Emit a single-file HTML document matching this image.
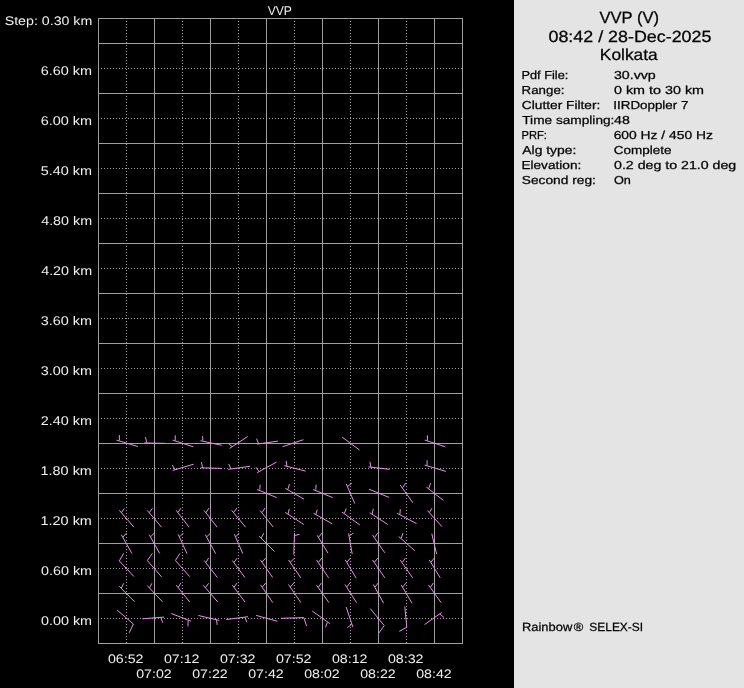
<!DOCTYPE html>
<html><head><meta charset="utf-8"><style>
html,body{margin:0;padding:0;background:#000;width:744px;height:688px;overflow:hidden;font-family:"Liberation Sans",sans-serif}
#rp{position:absolute;left:514px;top:0;width:230px;height:688px;background:#e4e4e4}
</style></head><body>
<div id="rp"></div>
<svg width="744" height="688" viewBox="0 0 744 688" style="position:absolute;left:0;top:0;will-change:transform" font-family="Liberation Sans, sans-serif" text-rendering="geometricPrecision"><defs><pattern id="dh" x="98" y="0" width="3" height="1" patternUnits="userSpaceOnUse"><rect x="0" y="0" width="1" height="1" fill="#a0a0a0"/></pattern><pattern id="dv" x="0" y="18" width="1" height="3" patternUnits="userSpaceOnUse"><rect x="0" y="0" width="1" height="1" fill="#a0a0a0"/></pattern></defs><rect x="98" y="68" width="365" height="1" fill="url(#dh)"/><rect x="98" y="118" width="365" height="1" fill="url(#dh)"/><rect x="98" y="168" width="365" height="1" fill="url(#dh)"/><rect x="98" y="218" width="365" height="1" fill="url(#dh)"/><rect x="98" y="268" width="365" height="1" fill="url(#dh)"/><rect x="98" y="318" width="365" height="1" fill="url(#dh)"/><rect x="98" y="368" width="365" height="1" fill="url(#dh)"/><rect x="98" y="418" width="365" height="1" fill="url(#dh)"/><rect x="98" y="468" width="365" height="1" fill="url(#dh)"/><rect x="98" y="518" width="365" height="1" fill="url(#dh)"/><rect x="98" y="568" width="365" height="1" fill="url(#dh)"/><rect x="98" y="618" width="365" height="1" fill="url(#dh)"/><rect x="126" y="18" width="1" height="626" fill="url(#dv)"/><rect x="182" y="18" width="1" height="626" fill="url(#dv)"/><rect x="238" y="18" width="1" height="626" fill="url(#dv)"/><rect x="294" y="18" width="1" height="626" fill="url(#dv)"/><rect x="350" y="18" width="1" height="626" fill="url(#dv)"/><rect x="406" y="18" width="1" height="626" fill="url(#dv)"/><rect x="98" y="43" width="365" height="1" fill="#a0a0a0"/><rect x="98" y="93" width="365" height="1" fill="#a0a0a0"/><rect x="98" y="143" width="365" height="1" fill="#a0a0a0"/><rect x="98" y="193" width="365" height="1" fill="#a0a0a0"/><rect x="98" y="243" width="365" height="1" fill="#a0a0a0"/><rect x="98" y="293" width="365" height="1" fill="#a0a0a0"/><rect x="98" y="343" width="365" height="1" fill="#a0a0a0"/><rect x="98" y="393" width="365" height="1" fill="#a0a0a0"/><rect x="98" y="443" width="365" height="1" fill="#a0a0a0"/><rect x="98" y="493" width="365" height="1" fill="#a0a0a0"/><rect x="98" y="543" width="365" height="1" fill="#a0a0a0"/><rect x="98" y="593" width="365" height="1" fill="#a0a0a0"/><rect x="98" y="18" width="365" height="1" fill="#a0a0a0"/><rect x="98" y="643" width="365" height="1" fill="#a0a0a0"/><rect x="98" y="18" width="1" height="626" fill="#a0a0a0"/><rect x="462" y="18" width="1" height="626" fill="#a0a0a0"/><rect x="154" y="18" width="1" height="626" fill="#a0a0a0"/><rect x="210" y="18" width="1" height="626" fill="#a0a0a0"/><rect x="266" y="18" width="1" height="626" fill="#a0a0a0"/><rect x="322" y="18" width="1" height="626" fill="#a0a0a0"/><rect x="378" y="18" width="1" height="626" fill="#a0a0a0"/><rect x="434" y="18" width="1" height="626" fill="#a0a0a0"/><g fill="none" stroke="#ec8eec" stroke-width="1.0" stroke-linecap="butt" stroke-linejoin="miter"><polyline points="116.5,440.1 137.8,446.5"/><polyline points="119.4,440.4 119.4,435.1"/><polyline points="144.3,442.9 165.5,443.4"/><polyline points="146.7,442.5 145.5,437.1"/><polyline points="172.7,440.1 193.3,446.8"/><polyline points="175.2,440.5 175.2,435.3"/><polyline points="200.5,440.7 221.7,445.3"/><polyline points="202.9,440.5 202.5,436.2"/><polyline points="229.6,448.4 247.7,436.5"/><polyline points="232.1,446.5 228.1,443.3"/><polyline points="257.3,444.1 277.9,441.1"/><polyline points="258.6,443.7 256.5,438.7"/><polyline points="282.6,446.7 303.4,439.7"/><polyline points="342.2,437.1 359.5,450"/><polyline points="424.8,440.1 445.3,446.8"/><polyline points="427.4,440.5 427.4,435.3"/><polyline points="172.7,470.5 193.6,464.2"/><polyline points="175.1,469.7 172.3,465.1"/><polyline points="200.5,467.8 221.9,468.4"/><polyline points="202.6,467.8 201.4,462.1"/><polyline points="228.3,469.3 250,466.3"/><polyline points="230.8,468.7 228.7,463.9"/><polyline points="257.2,472.6 276.6,462.1"/><polyline points="259,471.4 256,467.3"/><polyline points="284.4,465.7 305.6,471.1"/><polyline points="286.9,466.1 286.2,460.9"/><polyline points="368.5,466.9 389.6,469.3"/><polyline points="370.9,467.3 369.9,461.7"/><polyline points="424.7,465.1 445.9,471.4"/><polyline points="427.1,465.5 427.1,460.3"/><polyline points="257.1,489.5 276.7,497.6"/><polyline points="259.8,489.7 260.1,484.7"/><polyline points="285.3,488.3 304,499.2"/><polyline points="288,488.9 289.5,484"/><polyline points="313,489.5 332.7,497.6"/><polyline points="315.8,489.7 316.1,484.7"/><polyline points="346.3,484 354.8,503.6"/><polyline points="347.5,486.5 351.8,483.1"/><polyline points="369,489.2 389,497.4"/><polyline points="400.2,485 412.9,502.8"/><polyline points="402.6,487.7 405.6,483.1"/><polyline points="426.3,487.1 443.3,500.3"/><polyline points="428.7,488.5 430.6,483.2"/><polyline points="119.3,510.3 133.8,527"/><polyline points="121.3,512.7 124.4,508.4"/><polyline points="147.3,510.5 161.6,527.2"/><polyline points="149.2,512.7 152.4,508.4"/><polyline points="176.1,510.3 189.1,527.2"/><polyline points="178.2,512.1 181,508.1"/><polyline points="204.1,510.5 217.1,527.2"/><polyline points="205.9,512.7 209,508.1"/><polyline points="231.6,510.3 245.6,527.2"/><polyline points="233.8,512.1 236.8,508.1"/><polyline points="260.1,510.5 273.1,527"/><polyline points="262.2,512.4 265,508.1"/><polyline points="285.3,512.4 303.8,524.5"/><polyline points="288.1,513.9 289.3,508.8"/><polyline points="313.5,513.3 332.3,523.8"/><polyline points="315.9,514.5 317.2,509.7"/><polyline points="342,512.1 359.9,525"/><polyline points="344.4,513.3 346.2,508.4"/><polyline points="369.7,512.7 387.8,524.5"/><polyline points="372.1,514.1 373.3,508.8"/><polyline points="397.2,513.3 416.5,523.6"/><polyline points="399.9,514.5 400.3,509.3"/><polyline points="427.4,510.5 441.9,526.6"/><polyline points="429.6,512.4 432,508.1"/><polyline points="121.3,534.7 131.9,553.4"/><polyline points="122.9,537.1 126.5,533.1"/><polyline points="149.2,534.7 159.7,553.4"/><polyline points="150.7,536.7 154.6,532.8"/><polyline points="178.2,534.3 187,553.6"/><polyline points="179.8,536.7 183.4,533.1"/><polyline points="205.3,534.7 215.6,553.6"/><polyline points="206.9,536.7 210.5,533.1"/><polyline points="234.4,534.3 242.8,553.6"/><polyline points="235.9,536.7 239.2,533.1"/><polyline points="259.2,536.2 274.6,551.6"/><polyline points="261.3,537.9 263.8,533.1"/><polyline points="294.5,533.1 293.8,554.6"/><polyline points="294.8,535.5 299.6,534.3"/><polyline points="317.2,535.3 328,553.2"/><polyline points="318.7,537.1 322,533.1"/><polyline points="348.6,533.4 352.2,554"/><polyline points="349.2,535.9 353.4,533.1"/><polyline points="372.5,535 384.8,552.8"/><polyline points="374.9,537.1 377.6,533.1"/><polyline points="398.7,536.5 414.8,550.7"/><polyline points="401.2,538.3 403,533.1"/><polyline points="431.8,533.7 436.6,554.1"/><polyline points="123.7,553.3 119.3,560.9 134,576.6"/><polyline points="152.4,553.3 147.3,560.5 161.6,576.9"/><polyline points="180,553.3 175.4,560.5 189.7,576.6"/><polyline points="204.1,560.5 217.4,577.5"/><polyline points="205.9,562.4 208.6,558.1"/><polyline points="232.3,560.5 244.9,577.5"/><polyline points="234,562.4 237.1,558.1"/><polyline points="260.4,559.9 272.7,577.5"/><polyline points="262.2,562.1 265.5,558.1"/><polyline points="288.5,559.9 300.8,577.8"/><polyline points="290.5,562.1 294.5,558.1"/><polyline points="316.5,559.9 328.6,577.8"/><polyline points="318.7,562.1 322,557.8"/><polyline points="345.3,559.9 356.2,578.1"/><polyline points="347,562.1 350.4,558.1"/><polyline points="372.5,559.9 384.8,577.8"/><polyline points="374.5,562.1 377.8,558.1"/><polyline points="400.3,560.2 412.6,577.8"/><polyline points="402.4,562.1 405.4,558.1"/><polyline points="429.3,559.9 440.2,577.8"/><polyline points="431,562.1 434.2,558.1"/><polyline points="119.3,586.3 134.6,601.8"/><polyline points="121.3,588.1 123.7,583.3"/><polyline points="147.3,585.7 162.5,601.8"/><polyline points="149.5,587.8 151.9,583.3"/><polyline points="176.1,585.1 189.7,602"/><polyline points="178.2,587.3 181,582.9"/><polyline points="203.3,585.3 217.8,602"/><polyline points="205.3,587.8 208.6,583.3"/><polyline points="232.3,585.1 245.2,602.3"/><polyline points="234,587.3 237.1,582.9"/><polyline points="260.6,584.9 272.7,602.6"/><polyline points="262.5,586.9 265.8,582.9"/><polyline points="288.5,584.5 300.8,602.6"/><polyline points="290.5,586.9 294.2,582.4"/><polyline points="316.5,585.1 328.9,602.6"/><polyline points="318.4,587.3 321.4,582.9"/><polyline points="345,584.5 356.5,602.6"/><polyline points="346.8,586.9 350.4,582.4"/><polyline points="373.3,584.5 383.6,603.2"/><polyline points="375.1,586.9 378.5,582.7"/><polyline points="401.2,584.9 412,603.2"/><polyline points="402.7,586.9 406.4,582.7"/><polyline points="428.4,584.9 441.1,602.6"/><polyline points="430.5,587.3 433.4,582.9"/><polyline points="117.1,610.1 133.4,624 129.2,632.8"/><polyline points="142.3,618.8 164,617.1"/><polyline points="160.9,617.4 162.8,622.8"/><polyline points="171.3,613.5 191.1,621.2"/><polyline points="188.2,620.4 187.9,626.4"/><polyline points="198.4,615.5 219.2,620.4"/><polyline points="216.6,619.8 217.1,624.9"/><polyline points="226.3,619.5 248,616.7"/><polyline points="244.9,617.1 246.8,622.2"/><polyline points="256.2,615.4 277.4,621.3"/><polyline points="281.2,618.3 303.8,617.6 306.6,626.1"/><polyline points="312.3,611.1 329.9,623.6"/><polyline points="327.4,622.2 325.6,627.3"/><polyline points="346.2,607.1 352.8,627"/><polyline points="351.6,624.4 347.4,627.6"/><polyline points="370.3,608.6 384.2,625.6 378.8,633.1"/><polyline points="404.8,606.5 406.8,627.3 399.3,631.3"/><polyline points="424.5,624.6 441.7,612.5"/><polyline points="439.9,614 443.9,617.4"/></g><text id="step" x="4.68" y="25.1" font-size="12.4" fill="#f0f0f0" textLength="87.64" lengthAdjust="spacingAndGlyphs">Step: 0.30 km</text><text id="lab0" x="40.72" y="74.9" font-size="12.6" fill="#f0f0f0" textLength="51.35" lengthAdjust="spacingAndGlyphs">6.60 km</text><text id="lab1" x="40.72" y="124.9" font-size="12.6" fill="#f0f0f0" textLength="51.35" lengthAdjust="spacingAndGlyphs">6.00 km</text><text id="lab2" x="40.83" y="174.9" font-size="12.6" fill="#f0f0f0" textLength="51.24" lengthAdjust="spacingAndGlyphs">5.40 km</text><text id="lab3" x="41.19" y="224.9" font-size="12.6" fill="#f0f0f0" textLength="50.89" lengthAdjust="spacingAndGlyphs">4.80 km</text><text id="lab4" x="41.19" y="274.9" font-size="12.6" fill="#f0f0f0" textLength="50.89" lengthAdjust="spacingAndGlyphs">4.20 km</text><text id="lab5" x="40.83" y="324.9" font-size="12.6" fill="#f0f0f0" textLength="51.18" lengthAdjust="spacingAndGlyphs">3.60 km</text><text id="lab6" x="40.83" y="374.9" font-size="12.6" fill="#f0f0f0" textLength="51.18" lengthAdjust="spacingAndGlyphs">3.00 km</text><text id="lab7" x="40.83" y="424.9" font-size="12.6" fill="#f0f0f0" textLength="51.26" lengthAdjust="spacingAndGlyphs">2.40 km</text><text id="lab8" x="40.56" y="474.9" font-size="12.6" fill="#f0f0f0" textLength="51.36" lengthAdjust="spacingAndGlyphs">1.80 km</text><text id="lab9" x="40.56" y="524.9" font-size="12.6" fill="#f0f0f0" textLength="51.36" lengthAdjust="spacingAndGlyphs">1.20 km</text><text id="lab10" x="41.02" y="574.9" font-size="12.6" fill="#f0f0f0" textLength="51.02" lengthAdjust="spacingAndGlyphs">0.60 km</text><text id="lab11" x="41.02" y="624.9" font-size="12.6" fill="#f0f0f0" textLength="51.02" lengthAdjust="spacingAndGlyphs">0.00 km</text><text id="vvptop" x="267.68" y="14.7" font-size="12.6" fill="#f0f0f0" textLength="24.23" lengthAdjust="spacingAndGlyphs">VVP</text><text id="t1_0" x="107.94" y="662.8" font-size="12.4" fill="#f0f0f0" textLength="35.60" lengthAdjust="spacingAndGlyphs">06:52</text><text id="t1_1" x="163.93" y="662.8" font-size="12.4" fill="#f0f0f0" textLength="35.60" lengthAdjust="spacingAndGlyphs">07:12</text><text id="t1_2" x="219.93" y="662.8" font-size="12.4" fill="#f0f0f0" textLength="35.60" lengthAdjust="spacingAndGlyphs">07:32</text><text id="t1_3" x="275.94" y="662.8" font-size="12.4" fill="#f0f0f0" textLength="35.60" lengthAdjust="spacingAndGlyphs">07:52</text><text id="t1_4" x="331.94" y="662.8" font-size="12.4" fill="#f0f0f0" textLength="35.60" lengthAdjust="spacingAndGlyphs">08:12</text><text id="t1_5" x="387.94" y="662.8" font-size="12.4" fill="#f0f0f0" textLength="35.60" lengthAdjust="spacingAndGlyphs">08:32</text><text id="t2_0" x="136.24" y="677.7" font-size="12.4" fill="#f0f0f0" textLength="35.44" lengthAdjust="spacingAndGlyphs">07:02</text><text id="t2_1" x="192.24" y="677.7" font-size="12.4" fill="#f0f0f0" textLength="35.44" lengthAdjust="spacingAndGlyphs">07:22</text><text id="t2_2" x="248.24" y="677.7" font-size="12.4" fill="#f0f0f0" textLength="35.44" lengthAdjust="spacingAndGlyphs">07:42</text><text id="t2_3" x="304.24" y="677.7" font-size="12.4" fill="#f0f0f0" textLength="35.44" lengthAdjust="spacingAndGlyphs">08:02</text><text id="t2_4" x="360.24" y="677.7" font-size="12.4" fill="#f0f0f0" textLength="35.44" lengthAdjust="spacingAndGlyphs">08:22</text><text id="t2_5" x="416.24" y="677.7" font-size="12.4" fill="#f0f0f0" textLength="35.44" lengthAdjust="spacingAndGlyphs">08:42</text><text id="h1" x="599.5" y="22.6" font-size="16.3" fill="#000" stroke="#000" stroke-width="0.25" textLength="59.48" lengthAdjust="spacingAndGlyphs">VVP (V)</text><text id="h2" x="548.47" y="41.9" font-size="16.2" fill="#000" stroke="#000" stroke-width="0.25" textLength="162.95" lengthAdjust="spacingAndGlyphs">08:42 / 28-Dec-2025</text><text id="h3" x="599.81" y="60.0" font-size="16" fill="#000" stroke="#000" stroke-width="0.25" textLength="57.96" lengthAdjust="spacingAndGlyphs">Kolkata</text><text id="ra0" x="521.48" y="78.6" font-size="11.6" fill="#000" stroke="#000" stroke-width="0.25" textLength="46.83" lengthAdjust="spacingAndGlyphs">Pdf File:</text><text id="rb0" x="613.9" y="78.6" font-size="11.6" fill="#000" stroke="#000" stroke-width="0.25" textLength="41.90" lengthAdjust="spacingAndGlyphs">30.vvp</text><text id="ra1" x="521.6" y="93.66999999999999" font-size="11.6" fill="#000" stroke="#000" stroke-width="0.25" textLength="42.89" lengthAdjust="spacingAndGlyphs">Range:</text><text id="rb1" x="613.97" y="93.66999999999999" font-size="11.6" fill="#000" stroke="#000" stroke-width="0.25" textLength="90.05" lengthAdjust="spacingAndGlyphs">0 km to 30 km</text><text id="ra2" x="521.85" y="108.74" font-size="11.6" fill="#000" stroke="#000" stroke-width="0.25" textLength="78.51" lengthAdjust="spacingAndGlyphs">Clutter Filter:</text><text id="rb2" x="613.33" y="108.74" font-size="11.6" fill="#000" stroke="#000" stroke-width="0.25" textLength="75.05" lengthAdjust="spacingAndGlyphs">IIRDoppler 7</text><text id="ra3" x="522.25" y="123.81" font-size="11.6" fill="#000" stroke="#000" stroke-width="0.25" textLength="92.17" lengthAdjust="spacingAndGlyphs">Time sampling:</text><text id="rb3" x="614.01" y="123.81" font-size="11.6" fill="#000" stroke="#000" stroke-width="0.25" textLength="15.79" lengthAdjust="spacingAndGlyphs">48</text><text id="ra4" x="521.59" y="138.88" font-size="11.6" fill="#000" stroke="#000" stroke-width="0.25" textLength="25.38" lengthAdjust="spacingAndGlyphs">PRF:</text><text id="rb4" x="613.67" y="138.88" font-size="11.6" fill="#000" stroke="#000" stroke-width="0.25" textLength="99.24" lengthAdjust="spacingAndGlyphs">600 Hz / 450 Hz</text><text id="ra5" x="522.33" y="153.95" font-size="11.6" fill="#000" stroke="#000" stroke-width="0.25" textLength="53.93" lengthAdjust="spacingAndGlyphs">Alg type:</text><text id="rb5" x="613.75" y="153.95" font-size="11.6" fill="#000" stroke="#000" stroke-width="0.25" textLength="57.69" lengthAdjust="spacingAndGlyphs">Complete</text><text id="ra6" x="521.4" y="169.01999999999998" font-size="11.6" fill="#000" stroke="#000" stroke-width="0.25" textLength="59.87" lengthAdjust="spacingAndGlyphs">Elevation:</text><text id="rb6" x="614.01" y="169.01999999999998" font-size="11.6" fill="#000" stroke="#000" stroke-width="0.25" textLength="122.28" lengthAdjust="spacingAndGlyphs">0.2 deg to 21.0 deg</text><text id="ra7" x="521.74" y="184.09" font-size="11.6" fill="#000" stroke="#000" stroke-width="0.25" textLength="74.22" lengthAdjust="spacingAndGlyphs">Second reg:</text><text id="rb7" x="613.96" y="184.09" font-size="11.6" fill="#000" stroke="#000" stroke-width="0.25" textLength="16.95" lengthAdjust="spacingAndGlyphs">On</text><text id="rainA" x="521.91" y="630.6" font-size="11.9" fill="#000" stroke="#000" stroke-width="0.25" textLength="50.34" lengthAdjust="spacingAndGlyphs">Rainbow</text><text id="rainR" x="573.82" y="630.6" font-size="11.9" fill="#000" stroke="#000" stroke-width="0.25" textLength="9.52" lengthAdjust="spacingAndGlyphs">®</text><text id="rainS" x="589.34" y="630.6" font-size="11.9" fill="#000" stroke="#000" stroke-width="0.25" textLength="53.77" lengthAdjust="spacingAndGlyphs">SELEX-SI</text></svg>
</body></html>
